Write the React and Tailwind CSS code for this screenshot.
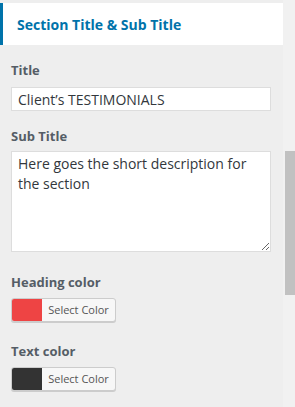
const ColorField = ({ label, swatch, className }) => (
  <div className={className}>
    <div className="text-[13px] font-bold leading-[18px] text-[#555d66]">{label}</div>
    <button className="mt-[7px] flex h-[24px] w-[105px] overflow-hidden rounded-[3px] border border-[#ccc] bg-[#f7f7f7] shadow-[0_1px_0_#ccc]">
      <span className={`h-full w-[30px] ${swatch}`} />
      <span className="flex-1 pt-[3px] text-center text-[11px] leading-[16px] text-[#555]">Select Color</span>
    </button>
  </div>
);

export default function App() {
  return (
    <div className="flex h-[407px] w-[295px] bg-[#eee] font-['Open_Sans',sans-serif]">
      <div className="w-[283px] pt-[3px]">
        <div className="flex h-[42px] items-center border-l-[3px] border-[#0073aa] bg-white pl-[14px]">
          <h3 className="text-[14px] font-bold text-[#0073aa]">Section Title &amp; Sub Title</h3>
        </div>

        <div className="px-[11px] pt-[16px]">
          <div className="text-[13px] font-bold leading-[18px] text-[#555d66]">Title</div>
          <input
            type="text"
            readOnly
            value="Client’s TESTIMONIALS"
            className="mt-[8px] h-[24px] w-[260px] border border-[#ddd] bg-white px-[6px] text-[14px] text-[#32373c] outline-none"
          />

          <div className="mt-[16px] text-[13px] font-bold leading-[18px] text-[#555d66]">Sub Title</div>
          <textarea
            readOnly
            defaultValue="Here goes the short description for the section"
            className="mt-[6px] block h-[101px] w-[260px] border border-[#ddd] bg-white px-[6px] py-[2px] text-[14px] leading-[20px] text-[#32373c] outline-none"
          />

          <ColorField className="mt-[21px]" label="Heading color" swatch="bg-[#e44]" />
          <ColorField className="mt-[20px]" label="Text color" swatch="bg-[#333]" />
        </div>
      </div>

      <div className="w-[12px] bg-[#f1f1f1] pl-[2px] pt-[151px]">
        <div className="h-[144px] w-[10px] bg-[#c1c1c1]" />
      </div>
    </div>
  );
}
